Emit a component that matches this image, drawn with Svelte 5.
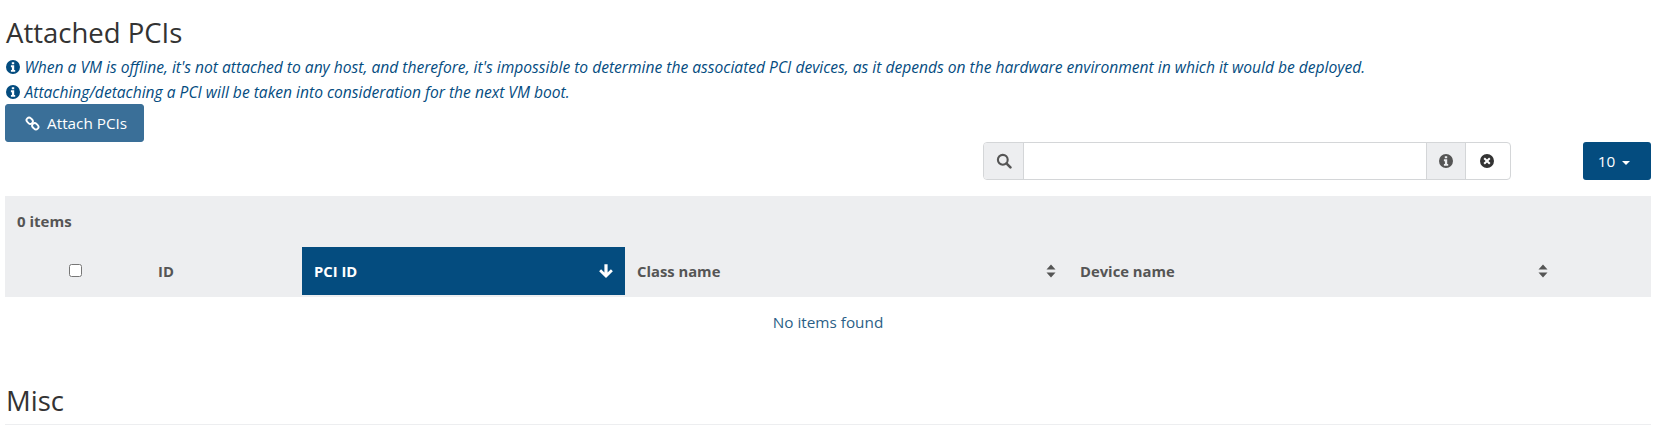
<script>
	const notes = [
		"When a VM is offline, it's not attached to any host, and therefore, it's impossible to determine the associated PCI devices, as it depends on the hardware environment in which it would be deployed.",
		'Attaching/detaching a PCI will be taken into consideration for the next VM boot.'
	];
</script>

{#snippet info(cls)}
	<svg class={cls} viewBox="0 0 16 16" aria-hidden="true">
		<path fill-rule="evenodd" d="M8 1a7 7 0 1 0 0 14A7 7 0 0 0 8 1zM6.800 3.200h2.400v2.100H6.800zM5.900 6.300h3.300v4.600h1v1.900H5.900v-1.900h1V8.200h-1z" />
	</svg>
{/snippet}

{#snippet sortIcon()}
	<svg class="sort" viewBox="0 0 10 14" aria-hidden="true">
		<path d="M5 0.5 9.500 5.600H.5zM.5 8.400h9L5 13.500z" />
	</svg>
{/snippet}

<main class="page">
	<h2 class="title">Attached PCIs</h2>
	{#each notes as note}
		<p class="note">{@render info('note-icon')}<em>{note}</em></p>
	{/each}

	<button class="attach" type="button">
		<svg class="link-icon" viewBox="0 0 16 16" aria-hidden="true">
			<g fill="none" stroke="currentColor" stroke-width="2">
				<rect x="1.400" y="2.300" width="7.200" height="5.400" rx="2.700" transform="rotate(45 5 5)" />
				<rect x="7.400" y="8.300" width="7.200" height="5.400" rx="2.700" transform="rotate(45 11 11)" />
			</g>
		</svg>
		Attach PCIs
	</button>

	<div class="toolbar">
		<div class="search">
			<span class="addon left">
				<svg class="search-icon" viewBox="0 0 16 16" aria-hidden="true">
					<circle cx="6.800" cy="6.800" r="4.900" fill="none" stroke="currentColor" stroke-width="2.100" />
					<path d="M10.400 10.400 14.400 14.400" stroke="currentColor" stroke-width="2.600" stroke-linecap="round" />
				</svg>
			</span>
			<input type="text" aria-label="Search" />
			<span class="addon info-addon">{@render info('addon-icon')}</span>
			<span class="clear">
				<svg class="addon-icon dark" viewBox="0 0 16 16" aria-hidden="true">
					<path fill-rule="evenodd" d="M8 1a7 7 0 1 0 0 14A7 7 0 0 0 8 1zM5.900 4.500 8 6.600l2.100-2.100 1.400 1.400L9.400 8l2.100 2.100-1.400 1.400L8 9.400l-2.100 2.100-1.400-1.400L6.600 8 4.500 5.900z" />
				</svg>
			</span>
		</div>
		<button class="page-size" type="button">10 <span class="caret"></span></button>
	</div>

	<div class="band">
		<div class="count">0 items</div>
		<table>
			<colgroup>
				<col style="width: 141px" />
				<col style="width: 156px" />
				<col style="width: 323px" />
				<col style="width: 443px" />
				<col style="width: 492px" />
				<col />
			</colgroup>
			<thead>
				<tr>
					<th class="check"><input type="checkbox" aria-label="Select all" /></th>
					<th>ID</th>
					<th class="active">
						<span class="cell">PCI ID
							<svg class="arrow" viewBox="0 0 14 14" aria-hidden="true">
								<path d="M7 13.200 1 7.200l1.700-1.700 2.900 2.900V1h2.800v7.400l2.900-2.900L13 7.200z" fill="currentColor" />
							</svg>
						</span>
					</th>
					<th><span class="cell">Class name {@render sortIcon()}</span></th>
					<th><span class="cell">Device name {@render sortIcon()}</span></th>
					<th></th>
				</tr>
			</thead>
		</table>
	</div>
	<p class="empty">No items found</p>

	<h2 class="title misc">Misc</h2>
</main>

<style>
	:global(body) {
		background: #fff;
	}

	.page {
		box-sizing: border-box;
		width: 1675px;
		height: 425px;
		padding: 0 24px 0 5px;
		overflow: hidden;
		font-family: 'Open Sans', sans-serif;
		font-size: 15.3px;
		color: #044c7f;
	}

	.title {
		margin: 0;
		padding: 15px 0 4px 1px;
		font-size: 27.5px;
		font-weight: 500;
		line-height: 36px;
		color: #333;
	}

	.note {
		display: flex;
		align-items: center;
		gap: 4px;
		margin: 0;
		height: 24.5px;
		line-height: 24px;
		font-size: 15.6px;
		white-space: nowrap;
	}

	.note-icon {
		width: 16px;
		height: 16px;
		margin-left: -0.5px;
		fill: #044c7f;
	}

	.attach {
		display: flex;
		align-items: center;
		gap: 7px;
		box-sizing: border-box;
		width: 139px;
		height: 38px;
		padding: 0 0 0 19px;
		border: 1px solid #3a6f98;
		border-radius: 3px;
		background: #3a6f98;
		color: #fff;
		font: inherit;
	}

	.link-icon {
		width: 15px;
		height: 15px;
	}

	.toolbar {
		display: flex;
		justify-content: flex-end;
		gap: 72px;
		height: 54px;
	}

	.search {
		display: flex;
		box-sizing: border-box;
		width: 528px;
		height: 38px;
		border: 1px solid #d4d6d8;
		border-radius: 4px;
	}

	.addon {
		display: flex;
		align-items: center;
		justify-content: center;
		background: #edeef0;
		color: #555;
	}

	.left {
		width: 39px;
		border-right: 1px solid #d4d6d8;
		border-radius: 3px 0 0 3px;
	}

	.search-icon {
		width: 16px;
		height: 16px;
	}

	input[type='text'] {
		flex: 1;
		min-width: 0;
		border: 0;
		outline: 0;
		background: #fff;
	}

	.info-addon {
		width: 38px;
		border-left: 1px solid #d4d6d8;
	}

	.addon-icon {
		width: 16px;
		height: 16px;
		fill: #555;
	}

	.addon-icon.dark {
		fill: #333;
	}

	.clear {
		display: flex;
		align-items: center;
		justify-content: center;
		width: 45px;
		border-left: 1px solid #d4d6d8;
		padding-right: 3px;
		box-sizing: border-box;
	}

	.page-size {
		box-sizing: border-box;
		width: 68px;
		height: 38px;
		padding: 0 6px 0 0;
		border: 0;
		border-radius: 3px;
		background: #044c7f;
		color: #fff;
		font: inherit;
	}

	.caret {
		display: inline-block;
		margin-left: 3px;
		vertical-align: middle;
		border-top: 4px solid #fff;
		border-left: 4px solid transparent;
		border-right: 4px solid transparent;
	}

	.band {
		height: 101px;
		background: #edeef0;
		color: #555;
		font-weight: 700;
	}

	.count {
		height: 51px;
		padding: 15px 0 0 12px;
		box-sizing: border-box;
		line-height: 20px;
		font-size: 15px;
	}

	table {
		width: 100%;
		table-layout: fixed;
		border-collapse: collapse;
	}

	th {
		box-sizing: border-box;
		height: 48px;
		padding: 0 12px;
		text-align: left;
		font-size: 14.8px;
		font-weight: 700;
		color: #555;
	}

	th.check {
		padding: 0 0 5px 0;
		text-align: center;
	}

	th.check input {
		width: 13px;
		height: 13px;
		margin: 0;
		vertical-align: middle;
	}

	th.active {
		padding-right: 11px;
		background: #044c7f;
		color: #fff;
	}

	.cell {
		display: flex;
		align-items: center;
		justify-content: space-between;
	}

	.arrow {
		width: 16px;
		height: 16px;
	}

	.sort {
		width: 10px;
		height: 14px;
		fill: #555;
	}

	.empty {
		margin: 0;
		height: 50px;
		line-height: 50px;
		text-align: center;
		color: #2b5f87;
	}

	.misc {
		padding-top: 36px;
		padding-bottom: 5px;
		border-bottom: 1px solid #edeef0;
	}
</style>
